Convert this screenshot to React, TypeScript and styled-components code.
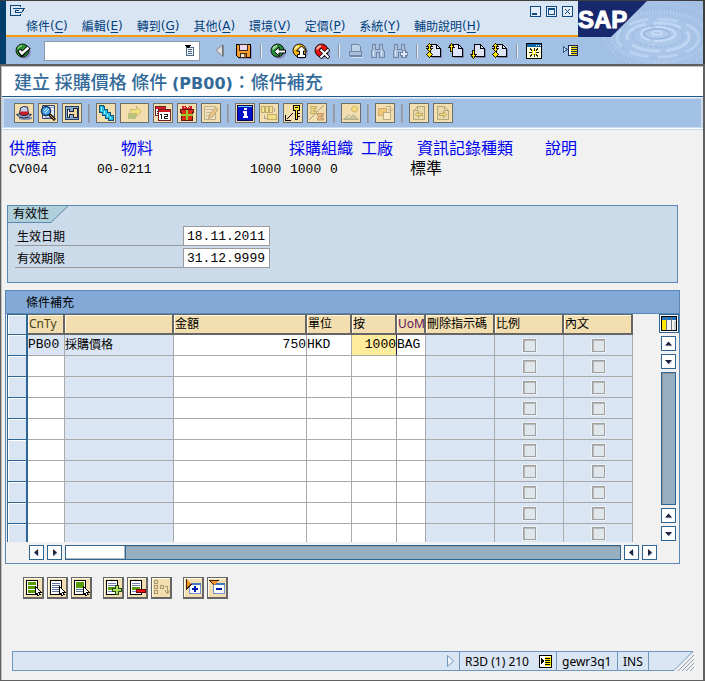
import React from 'react';
import styled, { createGlobalStyle, css } from 'styled-components';

const ui = '"Noto Sans", "Noto Sans CJK TC", sans-serif';
const mono = '"Liberation Mono", "Noto Sans CJK TC", monospace';

const GlobalStyle = createGlobalStyle`
  *, *::before, *::after { box-sizing: border-box; }
  body { margin: 0; background: #f1f1f1; font: 12px/16px ${ui}; color: #000; }
  button, input { font: inherit; color: inherit; margin: 0; border-radius: 0; }
  button { padding: 0; }
  svg { display: block; flex: none; }
  h1, h2 { margin: 0; font-weight: 400; }
`;

/* ---------- window frame ---------- */
const Window = styled.div`
  min-height: 100vh;
  display: flex;
  flex-direction: column;
  border-top: 1px solid #404040;
  background: #f1f1f1;
`;
const Header = styled.header`
  display: grid;
  grid-template-columns: 1fr 125px;
  border-left: 6px solid #003f6b;
  border-right: 2px solid #404040;
  background: #a2bfe4;
`;
const HeaderMain = styled.div`min-width: 0;`;
const TitleStrip = styled.div`
  height: 17px;
  display: flex;
  justify-content: space-between;
  align-items: flex-start;
  padding: 4px 5px 0 4px;
  background: #dae5f3;
`;
const PlainButton = styled.button`
  border: 0;
  background: none;
  display: flex;
`;
const WindowButtons = styled.div`display: flex; gap: 5px; padding-top: 1px;`;
const MenuBar = styled.nav`
  height: 19px;
  display: flex;
  gap: 14px;
  padding-left: 20px;
  background: #dae5f3;
  border-bottom: 2px solid #f79a10;
`;
const MenuItem = styled.a`
  display: flex;
  white-space: nowrap;
  color: #003f7d;
  text-decoration: none;
  line-height: 17px;
`;
const Mnemonic = styled.span`
  font-family: "DejaVu Sans", sans-serif;
  u { text-underline-offset: 2px; }
`;
const StandardBar = styled.div`
  height: 27px;
  display: flex;
  align-items: center;
  gap: 6px;
  padding-left: 9px;
`;
const CommandBox = styled.div`
  display: flex;
  align-items: center;
  width: 156px;
  height: 20px;
  margin: 0 8px 0 7px;
  padding-right: 4px;
  background: #fff;
  border: 1px solid #8a98a8;
`;
const CommandInput = styled.input`
  flex: 1;
  min-width: 0;
  height: 18px;
  border: 0;
  outline: 0;
  background: transparent;
`;
const Divider = styled.span<{ $tall?: boolean }>`
  width: 2px;
  height: ${p => (p.$tall ? 19 : 14)}px;
  margin: 0 2px;
  background: #8c96a8;
  border-right: 1px solid ${p => (p.$tall ? '#a0a4ac' : '#e4ecf6')};
`;
const Spacer = styled.span`width: 8px;`;
const Workspace = styled.main`
  flex: 1;
  display: flex;
  flex-direction: column;
  border: solid #606060;
  border-width: 2px 2px 1px 1px;
  box-shadow: inset 1px 1px 0 #c0c0c0;
  padding: 1px 0 0 1px;
`;
const PageTitle = styled.h1`
  height: 30px;
  padding-left: 12px;
  background: #fff;
  border-bottom: 1px solid #1a5a8a;
  color: #346a99;
  font-size: 18px;
  line-height: 30px;
  font-weight: 500;
  white-space: nowrap;
`;
const TitleCode = styled.span`
  font-family: "DejaVu Sans", sans-serif;
  font-size: 16px;
  font-weight: 700;
`;
const AppBar = styled.div`
  display: flex;
  align-items: center;
  gap: 4px;
  height: 30px;
  margin-top: 1px;
  padding-left: 10px;
  background: #a2bfe4;
  border: solid #cbdcf0;
  border-width: 1px 2px 1px 2px;
  box-shadow: 0 1px 0 #fff, 0 2px 0 #c5d9e6;
`;
const AppButton = styled.button<{ $wide?: boolean }>`
  display: flex;
  align-items: center;
  justify-content: center;
  width: ${p => (p.$wide ? 29 : 20)}px;
  height: 20px;
  background: #f2deae;
  border: 1px solid #6e6e68;
  &:disabled > svg { opacity: 0.5; }
`;

/* ---------- key fields ---------- */
const KeyFields = styled.section`padding: 9px 0 0 7px;`;
const keyRow = css`
  display: grid;
  white-space: nowrap;
`;
const KeyLabels = styled.div`
  ${keyRow}
  grid-template-columns: 112px 168px 72px 56px 128px auto;
  color: #0000f0;
  font-size: 16px;
  line-height: 22px;
`;
const KeyValues = styled.div`
  ${keyRow}
  grid-template-columns: 88px 153px 40px 40px 80px auto;
  font: 13px/22px ${mono};
`;
const KeyText = styled.span`font-size: 16px;`;

/* ---------- validity ---------- */
const ValidityBox = styled.section`
  margin: 24px 25px 0 5px;
  padding-bottom: 12px;
  border: 1px solid #5b87b3;
  background: #ccdbe9;
`;
const TabTitle = styled.h2`
  position: relative;
  width: 60px;
  height: 17px;
  font-size: 12px;
  line-height: 16px;
  margin-bottom: 3px;
`;
const TabShape = styled.svg`position: absolute; left: 0; top: 0;`;
const TabText = styled.span`position: relative; padding-left: 5px;`;
const FieldRow = styled.div`
  display: flex;
  align-items: flex-end;
  margin: 0 0 2px 7px;
`;
const FieldLabel = styled.label`
  width: 168px;
  height: 20px;
  padding-left: 2px;
  line-height: 22px;
  border-bottom: 1px solid #98999c;
`;
const DateInput = styled.input`
  width: 87px;
  height: 20px;
  padding: 0 0 0 3px;
  border: 1px solid #9a9a9a;
  background: #fff;
  font: 13px/18px ${mono};
`;

/* ---------- condition table ---------- */
const TableBox = styled.section`
  margin: 7px 23px 0 3px;
  border: 1px solid #5b87b3;
`;
const TableTitle = styled.h2`
  height: 23px;
  padding-left: 20px;
  background: #83aad7;
  border-bottom: 1px solid #5b87b3;
  font-size: 12px;
  line-height: 24px;
`;
const TableArea = styled.div`
  display: flex;
  gap: 26px;
  padding-left: 1px;
`;
const TableHolder = styled.div`flex: 1; min-width: 0;`;
const ConditionTable = styled.table`
  width: 100%;
  table-layout: fixed;
  border-collapse: separate;
  border-spacing: 0;
  line-height: 18px;
`;
const Col = styled.col<{ $w?: number }>`width: ${p => (p.$w ? p.$w + 'px' : 'auto')};`;
const HeadCell = styled.th<{ $tone?: string }>`
  height: 21px;
  padding: 0 0 0 1px;
  overflow: hidden;
  text-align: left;
  font-weight: 400;
  white-space: nowrap;
  color: ${p => p.$tone ?? '#000'};
  background: #f2deae;
  border: solid #666;
  border-width: 1px 2px 2px 0;
  box-shadow: inset 1px 1px 0 #fffbe8;
`;
const SelectHead = styled.th`
  height: 21px;
  padding: 0;
  background: #dae5f3;
  border: solid #2d6694;
  border-width: 1px 2px 1px 1px;
  box-shadow: inset 1px 1px 0 #fff;
`;
const Row = styled.tr`
  height: 21px;
  &:last-child { height: 18px; }
  &:last-child > td { border-bottom-width: 0; }
  &:last-child input { height: 17px; }
  &:last-child input[type='checkbox'] { height: 13px; }
`;
const SelectCell = styled.td`
  padding: 0;
  background: #dae5f3;
  border: solid #2d6694;
  border-width: 0 2px 1px 1px;
  box-shadow: inset 1px 1px 0 #fff;
`;
const SelectButton = styled.button`
  display: block;
  width: 100%;
  height: 17px;
  border: 0;
  background: none;
`;
const Cell = styled.td<{ $locked?: boolean; $focus?: boolean }>`
  padding: 0;
  overflow: hidden;
  white-space: nowrap;
  background: ${p => (p.$focus ? '#ffec9c' : p.$locked ? '#dae5f3' : '#fff')};
  border: solid #a9a9a9;
  border-width: 0 1px 1px 0;
  ${p => p.$focus && 'border-right-color: #102050;'}
`;
const CellInput = styled.input<{ $right?: boolean }>`
  display: block;
  width: 100%;
  height: 20px;
  padding: 0;
  border: 0;
  outline: 0;
  background: transparent;
  font: 13px/20px ${mono};
  text-align: ${p => (p.$right ? 'right' : 'left')};
`;
const Tick = styled.input`
  display: block;
  appearance: none;
  width: 13px;
  height: 13px;
  margin: 0 auto;
  background: #dfe6ec;
  border: 1px solid #a0a0a0;
  box-shadow: inset 1px 1px 0 #b8b8b8, 0 0 0 1px #eef1f4;
`;
const VerticalBar = styled.div`
  width: 20px;
  display: flex;
  flex-direction: column;
  align-items: flex-start;
  gap: 3px;
  padding: 0 0 1px 2px;
`;
const ConfigButton = styled.button`
  width: 20px;
  height: 19px;
  margin-left: -2px;
  display: flex;
  align-items: center;
  justify-content: center;
  background: #fff;
  border: 1px solid #2d6694;
`;
const HorizontalBar = styled.div`
  display: flex;
  gap: 3px;
  margin: 3px 22px 3px 23px;
`;
const ArrowButton = styled.button`
  width: 15px;
  height: 15px;
  display: flex;
  align-items: center;
  justify-content: center;
  background: #fff;
  border: 1px solid #2d6694;
`;
const Track = styled.div<{ $vertical?: boolean }>`
  flex: 1;
  ${p => (p.$vertical ? 'width: 15px;' : 'height: 15px;')}
  background: #96b0c1;
  border: 1px solid #2d6694;
  box-shadow: inset 1px 1px 0 #8f9498;
`;
const Thumb = styled.div`
  width: 60px;
  height: 13px;
  background: #fff;
  border: solid #2d6694;
  border-width: 0 1px 0 0;
  box-shadow: inset -1px -1px 0 #b4b4b4;
`;
const ActionBar = styled.div`
  display: flex;
  gap: 3px;
  padding: 13px 0 24px 21px;
`;
const ActionButton = styled.button<{ $start?: boolean }>`
  width: 21px;
  height: 22px;
  margin-left: ${p => (p.$start ? 8 : 0)}px;
  display: flex;
  align-items: center;
  justify-content: center;
  background: #f2deae;
  border: solid #666;
  border-width: 1px 2px 2px 1px;
  box-shadow: inset 1px 1px 0 #fffbe8;
  &:disabled > svg { opacity: 0.5; }
`;

/* ---------- status bar ---------- */
const StatusBar = styled.footer`
  display: flex;
  height: 20px;
  margin: auto 9px 9px 10px;
  line-height: 19px;
`;
const StatusCell = styled.div<{ $fill?: boolean; $w?: number }>`
  display: flex;
  align-items: center;
  justify-content: ${p => (p.$fill ? 'flex-end' : 'space-between')};
  flex: ${p => (p.$fill ? '1' : 'none')};
  ${p => p.$w && `width: ${p.$w}px;`}
  padding: 0 4px 0 5px;
  background: #dae5f3;
  border: solid #6f98be;
  border-width: 1px 0 1px 1px;
  white-space: nowrap;
`;

/* ---------- drawings ---------- */
type Art = { w?: number; h?: number; smooth?: boolean; children: React.ReactNode };
const Ico = ({ w = 16, h = 16, smooth, children }: Art) => (
  <svg width={w} height={h} viewBox={`0 0 ${w} ${h}`} fill="none" shapeRendering={smooth ? 'auto' : 'crispEdges'} aria-hidden="true">
    {children}
  </svg>
);

const CheckIcon = () => (
  <Ico smooth>
    <circle cx="9.5" cy="9.5" r="6.500" fill="#8a8fc4" />
    <circle cx="7.5" cy="7.5" r="6.5" fill="#2b8f31" stroke="#102810" />
    <path d="M3 5.500q1-2.500 4-3" stroke="#8ad48b" strokeWidth="1.500" />
    <path d="M4 7l3 4 7-7" stroke="#000" strokeWidth="4.500" />
    <path d="M4.500 7.500l2.500 3 6.500-6" stroke="#fff" strokeWidth="2.500" />
  </Ico>
);
const Ball = ({ fill, shine, children }: { fill: string; shine: string; children: React.ReactNode }) => (
  <Ico smooth>
    <circle cx="9.5" cy="9.5" r="6.500" fill="#8a8fc4" />
    <circle cx="7.5" cy="7.5" r="6.5" fill={fill} stroke="#181818" />
    <path d="M3 6.500q1-3 4-3.500" stroke={shine} strokeWidth="2" />
    {children}
  </Ico>
);
const BackIcon = () => (
  <Ball fill="#278b35" shine="#a0d8a0"><path d="M4.500 8.500l4.500-4.500v3h6.500v3h-6.500v3z" fill="#fff" stroke="#000" /></Ball>
);
const UpIcon = () => (
  <Ball fill="#f6b400" shine="#fff0a0"><path d="M9.500 3l5 5h-3v3.500h2v3h-8v-3h2v-3.500h-3z" fill="#fff" stroke="#000" /></Ball>
);
const CancelIcon = () => (
  <Ball fill="#e81010" shine="#ffb0a0">
    <path d="M6 6l9 9M15 6l-9 9" stroke="#000" strokeWidth="3.500" />
    <path d="M6.500 6.500l8 8M14.500 6.500l-8 8" stroke="#fff" strokeWidth="2" />
  </Ball>
);
const SaveIcon = () => (
  <Ico>
    <path d="M.5 1.500h14v13h-12l-2-2z" fill="#f79a30" stroke="#000" />
    <path d="M15.500 3v12.500h-13" stroke="#8a8fc4" />
    <path d="M3.500 1.500h8v6h-8z" fill="#ead8ee" stroke="#402818" />
    <path d="M4.500 10.500h6v4h-6z" fill="#f8ead0" stroke="#402818" />
    <path d="M8 11h2v3h-2z" fill="#a06a30" />
  </Ico>
);
const PrintIcon = () => (
  <Ico>
    <path d="M3.500 1.500h7l2 2v5h-9z" fill="#bcd0e8" stroke="#7187a5" />
    <path d="M1.500 8.500h12v4h-12z" fill="#a9bfdb" stroke="#7187a5" />
    <path d="M3 14.500h12" stroke="#d4e1f2" /><path d="M2 13.500h12" stroke="#7187a5" />
  </Ico>
);
const FindIcon = ({ plus }: { plus?: boolean }) => (
  <Ico>
    <path d="M2.500 1.500h3v5h4v-5h3v4l2 3v6h-5v-5h-3v5h-5v-6l1-3z" fill="#a9bfdb" stroke="#7187a5" />
    <path d="M3 8h1v5h-1zM11 8h1v5h-1z" fill="#dce8f5" />
    {plus && <path d="M8.500 9.500h2v-2h3v2h2v3h-2v2h-3v-2h-2z" fill="#dce8f5" stroke="#7187a5" />}
  </Ico>
);
const PageArrow = ({ up, down, both }: { up?: boolean; down?: boolean; both?: boolean }) => (
  <Ico>
    <path d="M6 14.500h9.500v-9" stroke="#8087b0" />
    <path d="M4.500 1.500h6l4 4v8h-10z" fill="#dfe4f8" stroke="#000" />
    <path d="M10.500 2v3.500h4" stroke="#000" />
    {up && <path d="M3.500.500l3 4h-2v4h-2v-4h-2z" fill="#ffe600" stroke="#201800" />}
    {down && <path d="M3.500 15.500l3-4h-2v-4h-2v4h-2z" fill="#ffe600" stroke="#201800" />}
    {both && <path d="M3.500.500l3 3h-2v2h2l-3 3-3-3h2v-2h-2zM3.500 8.500l3 3-3 3-3-3z" fill="#ffe600" stroke="#201800" />}
  </Ico>
);
const SessionIcon = () => (
  <Ico>
    <path d="M.5.500h15v15h-15z" fill="#ffffd8" stroke="#000" /><path d="M1 1h14v3h-14z" fill="#1465b0" />
    <path d="M10 2h1M12 2h1M14 2h1" stroke="#fff" />
    <path d="M6 7h4v5h-4z" fill="#ffe600" />
    <path d="M8 5v3M8 11v3M3 9.500h3M10 9.500h3M4 5.500l2 2M12 5.500l-2 2M4 13.500l2-2M12 13.500l-2-2" stroke="#302800" />
    <path d="M7 8h2v3h-2z" fill="#fff" />
  </Ico>
);
const LayoutIcon = () => (
  <Ico>
    <path d="M1 3l4 3.500-4 3.500z" fill="#dae5f3" stroke="#2d5c8c" />
    <path d="M6.500 2.500h9v10h-9z" fill="#ffe600" stroke="#182850" />
    <path d="M7 3h2v9h-2z" fill="#fff" /><path d="M9 4.500h6M9 6.500h6M9 8.500h6M9 10.500h6" stroke="#182850" />
  </Ico>
);
const HatIcon = () => (
  <Ico smooth>
    <path d="M3 12h13v2q-7 2-13 0z" fill="#7f8ab0" />
    <path d="M3.500 9l1-6 3-1.500 4 .5 1 7z" fill="#c6cdea" stroke="#222a48" />
    <path d="M4 6.500h8.500v4h-8.500z" fill="#c81e2c" />
    <path d="M.5 9.500l3-.500 2 1.500h5l2-1.500 3 .500-3 2.500-4.500 1-4.500-1z" fill="#a8b2d8" stroke="#222a48" />
  </Ico>
);
const LensIcon = () => (
  <Ico smooth>
    <path d="M2.500.500h12v13h-12z" fill="#e0e8f5" stroke="#324878" />
    <path d="M3 2.500h11M9 10.500h5M5 12.500h7" stroke="#9cacc8" />
    <circle cx="6" cy="6" r="4.500" fill="#4aa8e8" stroke="#17345f" strokeWidth="1.500" />
    <path d="M4 6l3-3M5 8l4-4" stroke="#d8f4ff" /><path d="M9.500 9.500l5.500 5.500" stroke="#000" strokeWidth="3" /><path d="M10 10l4.500 4.500" stroke="#ef9628" />
  </Ico>
);
const ScanIcon = () => (
  <Ico>
    <path d="M1.500 1.500h13v13h-13z" fill="#87aacb" stroke="#203a60" />
    <path d="M3.500 4.500h2v2h4v-3h4v9h-4v-3h-4v3h-2z" fill="#f2d8a0" stroke="#202a38" />
    <path d="M4 5v7" stroke="#fff" />
  </Ico>
);
const StairsIcon = () => (
  <Ico>
    <path d="M1.500.500h4l1 2v2h3v3h3v3h3v5h-5v-2h-3v-3h-3v-3h-3z" fill="#24bce6" stroke="#10547a" />
    <path d="M3.500 2v4M6.500 6v3M9.500 9v3M12.500 12v2" stroke="#92effc" />
  </Ico>
);
const ArrowDoc = () => (
  <Ico>
    <path d="M1 8h8v6h-8z" fill="#82a84c" />
    <path d="M3.500 4.500h6v-3l5 5-5 5v-3h-6z" fill="#f4e14c" stroke="#a89448" />
  </Ico>
);
const CalendarIcon = () => (
  <Ico>
    <path d="M.5 1.500h10v9h-10z" fill="#fff" stroke="#701e28" /><path d="M1 2h10v2h-10z" fill="#d21c22" />
    <path d="M2 6h1M2 8h1" stroke="#222" strokeWidth="1" />
    <path d="M3.500 4.500h12v11h-12z" fill="#fff" stroke="#701e28" /><path d="M4 5h11v2h-11z" fill="#d21c22" />
    <path d="M5 9.500h1.500v4M9 9.500h3.500v2h-3v2h3.500" stroke="#222" />
  </Ico>
);
const GiftIcon = () => (
  <Ico>
    <path d="M1.500 4.500h13v3h-1v8h-11v-8h-1z" fill="#d92b16" stroke="#5d1714" />
    <path d="M7 5h2v10h-2zM2 9h12v2h-12z" fill="#92cf27" />
    <path d="M3 1h3l2 2 2-2h3v3h-10z" fill="#d21c22" /><path d="M5 2.500h1M10 2.500h1" stroke="#f2deae" />
  </Ico>
);
const EditIcon = () => (
  <Ico smooth>
    <path d="M1.500 1.500h11v13h-11z" fill="#ece4cf" stroke="#8c826c" />
    <path d="M3 4.500h7M3 7.500h5M3 10.500h3" stroke="#a29880" />
    <path d="M5.500 13.500l1-4 6-7 2.500 2-6 7.500z" fill="#edb05d" stroke="#796848" />
  </Ico>
);
const InfoIcon = () => (
  <Ico>
    <path d="M.5.500h15v15h-15z" fill="#0011c8" stroke="#000064" /><path d="M1 1.500h14" stroke="#60d0ff" />
    <path d="M7 3h3v2h-3zM6 6h4v5h1v2h-5v-2h1v-3h-1z" fill="#fff" />
  </Ico>
);
const PacksIcon = () => (
  <Ico>
    <path d="M.5 1.500h3v6h-3zM4.500 1.500h3v6h-3zM8.500 1.500h3v6h-3z" fill="#f5e57f" stroke="#8d762a" />
    <path d="M6.500 9.500h9v5h-9z" fill="#f5dd59" stroke="#8d762a" /><path d="M13.500 3v4M3.500 10v3.500h2" stroke="#765e8d" />
  </Ico>
);
const KeyIcon = () => (
  <Ico>
    <path d="M8.500.500h6v5h-2v9h-2v-9h-2z" fill="#ffe12f" stroke="#000" /><path d="M13 8h2v1h-2zM13 11h2v1h-2z" fill="#000" />
    <path d="M10 2.500h3" stroke="#000" /><path d="M7.500 8.500l-6 6M.5 10v5h5" stroke="#000" />
  </Ico>
);
const SumIcon = () => (
  <Ico smooth>
    <path d="M1.500 1.500h6v2h-3l2 1.500-2 1.500h3v2h-6v-2l2-1.500-2-1.500z" fill="#f5d647" stroke="#8a742d" />
    <path d="M8.500 8.500h6v2h-3l2 1-2 1.500h3v2h-6v-2l2-1.500-2-1z" fill="#ef9a55" stroke="#8a512d" /><path d="M15 0L0 15" stroke="#665c48" />
  </Ico>
);
const PictureIcon = () => (
  <Ico smooth>
    <circle cx="11.500" cy="4" r="3" fill="#f5d647" stroke="#aa8d3c" />
    <path d="M.5 14.500l5-5 3 2.500 2-2 5 4.500z" fill="#a6ad94" stroke="#787a62" /><path d="M4 12l1.500-2 2 2z" fill="#fff" />
  </Ico>
);
const SwapIcon = () => (
  <Ico>
    <path d="M1.500 3.500h8v7h-8z" fill="#f4b040" stroke="#a28042" /><path d="M6.500 7.500h7v7h-7z" fill="#fff8dc" stroke="#8c8060" />
    <path d="M9 1.500h4.500v4M11.500 4.500l2 2 2-2" stroke="#85775c" />
  </Ico>
);
const DocArrow = ({ next }: { next?: boolean }) => (
  <Ico>
    <path d={next ? 'M2.500 1.500h7l4 4v9h-11zM9.500 1.500v4h4' : 'M13.500 1.500h-7l-4 4v9h11zM6.500 1.500v4h-4'} fill="#ddd7a0" stroke="#7d714f" />
    <path d={next ? 'M4.500 8.500h4v-2l3 3-3 3v-2h-4z' : 'M11.500 8.500h-4v-2l-3 3 3 3v-2h4z'} fill="#f4dc37" stroke="#8c7837" />
  </Ico>
);
const PullDownIcon = () => (
  <Ico w={10} h={13}>
    <path d="M1.500 3.500h7v8h-7z" fill="#eef4fa" stroke="#476584" />
    <path d="M0 1h6l-2 3h-2z" fill="#000" /><path d="M3 5.500h4M3 7.500h4M3 9.500h4" stroke="#476584" />
  </Ico>
);
const HistoryIcon = () => (
  <Ico w={10} h={13} smooth><path d="M8.500 1v11l-6.500-5.500z" fill="#dedede" stroke="#8a8a8a" /><path d="M9 1v11.500" stroke="#555" /></Ico>
);
const MenuIcon = () => (
  <Ico w={16} h={12}>
    <path d="M10 1.500v-1h-9.500v10h9.500v-2M3 3.500h12M14.500 3.500l-3 4h-6v-2h3" stroke="#0b477d" />
  </Ico>
);
const WinIcon = ({ kind }: { kind: 'min' | 'max' | 'close' }) => (
  <Ico w={11} h={11}>
    <path d="M.5.500h10v10h-10z" fill="#e4edf8" stroke="#124b82" />
    {kind === 'min' && <path d="M2 8h5" stroke="#124b82" strokeWidth="2" />}
    {kind === 'max' && <path d="M2.500 3.500h6v5h-6zM2 2.500h7" stroke="#124b82" />}
    {kind === 'close' && <path d="M3 3l5 5M8 3l-5 5" stroke="#124b82" />}
  </Ico>
);
const ColumnsIcon = () => (
  <Ico w={16} h={15}>
    <path d="M.5.500h15v14h-15z" fill="#f2f2f2" stroke="#000" /><path d="M1 1h14v3h-14z" fill="#2474bc" />
    <path d="M1 4h4v10h-4z" fill="#ffe700" /><path d="M5.500 1v13M10.500 1v13" stroke="#607080" /><path d="M13 5h2v9h-2z" fill="#c9ccd0" />
  </Ico>
);
const arrowShapes = {
  up: 'M1 6.500h7l-3.500-4z',
  down: 'M1 3h7l-3.500 4z',
  left: 'M6 1v7l-4-3.500z',
  right: 'M3 1v7l4-3.500z',
};
const Arrow = ({ dir }: { dir: keyof typeof arrowShapes }) => (
  <Ico w={9} h={9} smooth>
    <path d={arrowShapes[dir]} fill="#cfdbe8" transform="translate(1 1)" />
    <path d={arrowShapes[dir]} fill="#20253f" />
  </Ico>
);
type SheetKind = 'all' | 'lines' | 'block' | 'add' | 'remove';
const SheetIcon = ({ kind }: { kind: SheetKind }) => (
  <Ico w={17} h={17}>
    <path d="M1.500 1.500h11v14h-11z" fill="#fff" stroke="#000" />
    {kind === 'all' && <path d="M3 3h8v3h-8zM3 7h8v3h-8zM3 11h8v3h-8z" fill="#579b00" />}
    {kind === 'lines' && <path d="M3 4.500h8M3 6.500h8M3 8.500h8M3 10.500h8M3 12.500h8" stroke="#5c719d" />}
    {kind === 'block' && <><path d="M3 3h8v6h-8z" fill="#579b00" /><path d="M3 10.500h7M3 12.500h7" stroke="#5c719d" /></>}
    {(kind === 'add' || kind === 'remove') && (
      <><path d="M3 4.500h8M3 6.500h8M3 12.500h8" stroke="#7183b4" /><path d="M3 8h8v3h-8z" fill="#579b00" /></>
    )}
    {kind === 'add' && <path d="M7.500 9.500h3v-3h3v3h3v3h-3v3h-3v-3h-3z" fill="#b0e262" stroke="#24450c" />}
    {kind === 'remove' && <path d="M7.500 10.500h9v3h-9z" fill="#f01010" stroke="#700000" />}
    {!['add', 'remove'].includes(kind) && <path d="M10.500 7.500l6 6h-2.500l1 2-2 1-1-2-1.500 1z" fill="#fff" stroke="#000" />}
  </Ico>
);
const TreeIcon = () => (
  <Ico w={17} h={17}>
    <path d="M1.500 1.500h3v3h-3zM1.500 6.500h3v3h-3zM1.500 11.500h3v3h-3zM7.500 6.500h3v3h-3zM12 7.500h2.500v6M12 11.500l2.500 3 2-3" stroke="#6b5734" />
  </Ico>
);
const PaneIcon = ({ minus }: { minus?: boolean }) => (
  <Ico w={17} h={17}>
    <path d="M4.500 4.500h11v10h-11z" fill="#fff" stroke="#6c96d4" /><path d="M4 4h12v2h-12z" fill="#4277c2" />
    <path d={minus ? 'M0 1h10l-5 5z' : 'M1 0v10l6-5z'} fill="#f79520" />
    <path d={minus ? 'M0 1.500h10M1 2l4 4' : 'M1.500 0v10l5-5'} stroke="#402000" />
    <path d={minus ? 'M7 10h6' : 'M7 10h6M10 7v6'} stroke="#001bb0" strokeWidth="2" />
  </Ico>
);
const Brand = () => (
  <svg width="125" height="63" viewBox="0 0 125 63" role="img" aria-label="SAP">
    <defs>
      <radialGradient id="pool"><stop offset="0" stopColor="#b4cdec" /><stop offset="1" stopColor="#a2bfe4" /></radialGradient>
    </defs>
    <path d="M0 0h125v63H0z" fill="#a2bfe4" />
    <ellipse cx="80" cy="36" rx="52" ry="30" fill="url(#pool)" />
    <g fill="none" stroke="#c6dbf6">
      <ellipse cx="79" cy="32" rx="5" ry="2" strokeWidth="2" />
      <ellipse cx="79" cy="33" rx="13" ry="5" stroke="#90b0dc" />
      <ellipse cx="80" cy="33" rx="17" ry="7" strokeWidth="2" strokeDasharray="24 4" />
      <ellipse cx="80" cy="35" rx="25" ry="11" stroke="#94b4e0" strokeDasharray="3 2" />
      <ellipse cx="80" cy="36" rx="31" ry="14" strokeWidth="3" strokeDasharray="28 7" opacity=".8" />
      <ellipse cx="80" cy="37" rx="41" ry="19" strokeWidth="3" strokeDasharray="20 9" opacity=".6" />
      <ellipse cx="82" cy="36" rx="48" ry="25" strokeDasharray="1 2" strokeWidth="4" opacity=".6" />
      <ellipse cx="82" cy="34" rx="56" ry="32" strokeDasharray="1 3" strokeWidth="3" opacity=".5" />
    </g>
    <path d="M0 0h69L33 36H0z" fill="#17286d" />
    <text x="0" y="27" fill="#fff" stroke="#fff" fontFamily="'Liberation Sans', sans-serif" fontSize="24" fontWeight="700">SAP</text>
  </svg>
);

/* ---------- data ---------- */
const menus = [['條件', 'C'], ['編輯', 'E'], ['轉到', 'G'], ['其他', 'A'], ['環境', 'V'], ['定價', 'P'], ['系統', 'Y'], ['輔助說明', 'H']];

type Tool = { label: string; icon: React.ReactNode; off?: boolean; wide?: boolean };
const standardGroups: Tool[][] = [
  [{ label: '返回', icon: <BackIcon /> }, { label: '結束', icon: <UpIcon /> }, { label: '取消', icon: <CancelIcon /> }],
  [{ label: '列印', icon: <PrintIcon />, off: true }, { label: '尋找', icon: <FindIcon />, off: true }, { label: '繼續尋找', icon: <FindIcon plus />, off: true }],
  [{ label: '第一頁', icon: <PageArrow both /> }, { label: '上一頁', icon: <PageArrow up /> }, { label: '下一頁', icon: <PageArrow down /> }, { label: '最後一頁', icon: <PageArrow both /> }],
  [{ label: '新視窗', icon: <SessionIcon /> }],
];
const appGroups: Tool[][] = [
  [{ label: '表頭', icon: <HatIcon /> }, { label: '明細', icon: <LensIcon /> }, { label: '概觀', icon: <ScanIcon /> }],
  [
    { label: '級距', icon: <StairsIcon /> }, { label: '下一步', icon: <ArrowDoc />, off: true, wide: true },
    { label: '有效期間', icon: <CalendarIcon /> }, { label: '免費貨品', icon: <GiftIcon /> }, { label: '編輯內文', icon: <EditIcon />, off: true },
  ],
  [{ label: '資訊', icon: <InfoIcon /> }, { label: '包裝', icon: <PacksIcon />, off: true }, { label: '鍵值', icon: <KeyIcon /> }, { label: '累計', icon: <SumIcon />, off: true }],
  [{ label: '圖片', icon: <PictureIcon />, off: true }],
  [{ label: '替換', icon: <SwapIcon />, off: true }],
  [{ label: '前一個', icon: <DocArrow />, off: true }, { label: '後一個', icon: <DocArrow next />, off: true }],
];
const columns: { name: string; w?: number; tone?: string }[] = [
  { name: 'CnTy', w: 37, tone: '#4c401c' }, { name: '', w: 109 }, { name: '金額' }, { name: '單位', w: 45 },
  { name: '按', w: 45 }, { name: 'UoM', w: 29, tone: '#64145e' }, { name: '刪除指示碼', w: 69 }, { name: '比例', w: 69 }, { name: '內文', w: 69 },
];
const conditions = [
  { type: 'PB00', text: '採購價格', amount: '750', unit: 'HKD', per: '1000', uom: 'BAG' },
  ...Array.from({ length: 9 }, () => ({ type: '', text: '', amount: '', unit: '', per: '', uom: '' })),
];

export default function App() {
  return (
    <>
      <GlobalStyle />
      <Window>
        <Header>
          <HeaderMain>
            <TitleStrip>
              <PlainButton aria-label="選單"><MenuIcon /></PlainButton>
              <WindowButtons>
                <PlainButton aria-label="最小化"><WinIcon kind="min" /></PlainButton>
                <PlainButton aria-label="最大化"><WinIcon kind="max" /></PlainButton>
                <PlainButton aria-label="關閉"><WinIcon kind="close" /></PlainButton>
              </WindowButtons>
            </TitleStrip>
            <MenuBar>
              {menus.map(([name, key]) => (
                <MenuItem href="#" key={key}>{name}<Mnemonic>(<u>{key}</u>)</Mnemonic></MenuItem>
              ))}
            </MenuBar>
            <StandardBar>
              <PlainButton aria-label="輸入"><CheckIcon /></PlainButton>
              <CommandBox><CommandInput aria-label="命令欄位" /><PullDownIcon /></CommandBox>
              <PlainButton aria-label="隱藏命令欄位"><HistoryIcon /></PlainButton>
              <span />
              <PlainButton aria-label="儲存"><SaveIcon /></PlainButton>
              {standardGroups.map((group, i) => (
                <React.Fragment key={i}>
                  <Divider />
                  {group.map(t => <PlainButton key={t.label} aria-label={t.label} disabled={t.off}>{t.icon}</PlainButton>)}
                </React.Fragment>
              ))}
              <Spacer />
              <PlainButton aria-label="自訂版面"><LayoutIcon /></PlainButton>
            </StandardBar>
          </HeaderMain>
          <Brand />
        </Header>

        <Workspace>
          <PageTitle>建立 採購價格 條件 <TitleCode>(PB00)</TitleCode>：條件補充</PageTitle>
          <AppBar>
            {appGroups.map((group, i) => (
              <React.Fragment key={i}>
                {i > 0 && <Divider $tall />}
                {group.map(t => <AppButton key={t.label} aria-label={t.label} disabled={t.off} $wide={t.wide}>{t.icon}</AppButton>)}
              </React.Fragment>
            ))}
          </AppBar>

          <KeyFields>
            <KeyLabels>
              <span>供應商</span><span>物料</span><span>採購組織</span><span>工廠</span><span>資訊記錄種類</span><span>說明</span>
            </KeyLabels>
            <KeyValues>
              <span>CV004</span><span>00-0211</span><span>1000</span><span>1000</span><span>0</span><KeyText>標準</KeyText>
            </KeyValues>
          </KeyFields>

          <ValidityBox>
            <TabTitle>
              <TabShape width="60" height="17" viewBox="0 0 60 17" aria-hidden="true">
                <path d="M0 0h60L43 16.500H0z" fill="#afcfdb" />
                <path d="M60 0L43 16.500H0" fill="none" stroke="#5b87b3" />
              </TabShape>
              <TabText>有效性</TabText>
            </TabTitle>
            <FieldRow>
              <FieldLabel htmlFor="valid-from">生效日期</FieldLabel>
              <DateInput id="valid-from" defaultValue="18.11.2011" />
            </FieldRow>
            <FieldRow>
              <FieldLabel htmlFor="valid-to">有效期限</FieldLabel>
              <DateInput id="valid-to" defaultValue="31.12.9999" />
            </FieldRow>
          </ValidityBox>

          <TableBox>
            <TableTitle>條件補充</TableTitle>
            <TableArea>
              <TableHolder>
                <ConditionTable>
                  <colgroup>
                    <Col $w={21} />
                    {columns.map((c, i) => <Col key={i} $w={c.w} />)}
                  </colgroup>
                  <thead>
                    <tr>
                      <SelectHead aria-label="選取" />
                      {columns.map((c, i) => <HeadCell key={i} $tone={c.tone}>{c.name}</HeadCell>)}
                    </tr>
                  </thead>
                  <tbody>
                    {conditions.map((c, i) => (
                      <Row key={i}>
                        <SelectCell><SelectButton aria-label={`選取列 ${i + 1}`} /></SelectCell>
                        <Cell $locked={i === 0}><CellInput aria-label="條件類型" defaultValue={c.type} readOnly={i === 0} /></Cell>
                        <Cell $locked>{c.text}</Cell>
                        <Cell><CellInput $right aria-label="金額" defaultValue={c.amount} /></Cell>
                        <Cell><CellInput aria-label="單位" defaultValue={c.unit} /></Cell>
                        <Cell $focus={i === 0}><CellInput $right aria-label="按" defaultValue={c.per} /></Cell>
                        <Cell><CellInput aria-label="UoM" defaultValue={c.uom} /></Cell>
                        <Cell $locked />
                        <Cell $locked><Tick type="checkbox" aria-label="比例" disabled /></Cell>
                        <Cell $locked><Tick type="checkbox" aria-label="內文" disabled /></Cell>
                      </Row>
                    ))}
                  </tbody>
                </ConditionTable>
              </TableHolder>
              <VerticalBar>
                <ConfigButton aria-label="表格設定"><ColumnsIcon /></ConfigButton>
                <ArrowButton aria-label="向上"><Arrow dir="up" /></ArrowButton>
                <ArrowButton aria-label="向下"><Arrow dir="down" /></ArrowButton>
                <Track $vertical />
                <ArrowButton aria-label="上一頁"><Arrow dir="up" /></ArrowButton>
                <ArrowButton aria-label="下一頁"><Arrow dir="down" /></ArrowButton>
              </VerticalBar>
            </TableArea>
            <HorizontalBar>
              <ArrowButton aria-label="向左"><Arrow dir="left" /></ArrowButton>
              <ArrowButton aria-label="向右"><Arrow dir="right" /></ArrowButton>
              <Track><Thumb /></Track>
              <ArrowButton aria-label="左一頁"><Arrow dir="left" /></ArrowButton>
              <ArrowButton aria-label="右一頁"><Arrow dir="right" /></ArrowButton>
            </HorizontalBar>
          </TableBox>

          <ActionBar>
            <ActionButton aria-label="全選"><SheetIcon kind="all" /></ActionButton>
            <ActionButton aria-label="取消全選"><SheetIcon kind="lines" /></ActionButton>
            <ActionButton aria-label="選取區塊"><SheetIcon kind="block" /></ActionButton>
            <ActionButton $start aria-label="插入列"><SheetIcon kind="add" /></ActionButton>
            <ActionButton aria-label="刪除列"><SheetIcon kind="remove" /></ActionButton>
            <ActionButton aria-label="排序" disabled><TreeIcon /></ActionButton>
            <ActionButton $start aria-label="展開"><PaneIcon /></ActionButton>
            <ActionButton aria-label="收合"><PaneIcon minus /></ActionButton>
          </ActionBar>

          <StatusBar>
            <StatusCell $fill><Ico w={8} h={12} smooth><path d="M.5.500l6 5.500-6 5.500z" fill="#eef4fa" stroke="#6f98be" /></Ico></StatusCell>
            <StatusCell $w={97}>
              R3D (1) 210
              <PlainButton aria-label="系統資訊">
                <Ico w={13} h={13}>
                  <path d="M.5.500h12v12h-12z" fill="#fff" stroke="#000" /><path d="M2 3l3 3-3 3z" fill="#000" />
                  <path d="M6 2h6v9h-6z" fill="#ffe600" /><path d="M6 3.500h5M6 5.500h5M6 7.500h5M6 9.500h5" stroke="#000" />
                </Ico>
              </PlainButton>
            </StatusCell>
            <StatusCell $w={61}>gewr3q1</StatusCell>
            <StatusCell $w={31}>INS</StatusCell>
            <StatusCell $w={26} />
            <svg width="20" height="20" viewBox="0 0 20 20" aria-hidden="true">
              <path d="M0 0h19L0 19z" fill="#dae5f3" /><path d="M0 .5h19L0 19.500" fill="none" stroke="#6f98be" />
              <path d="M4 20L20 4M8 20L20 8M12 20l8-8M16 20l4-4" stroke="#8b9cb0" />
            </svg>
          </StatusBar>
        </Workspace>
      </Window>
    </>
  );
}
